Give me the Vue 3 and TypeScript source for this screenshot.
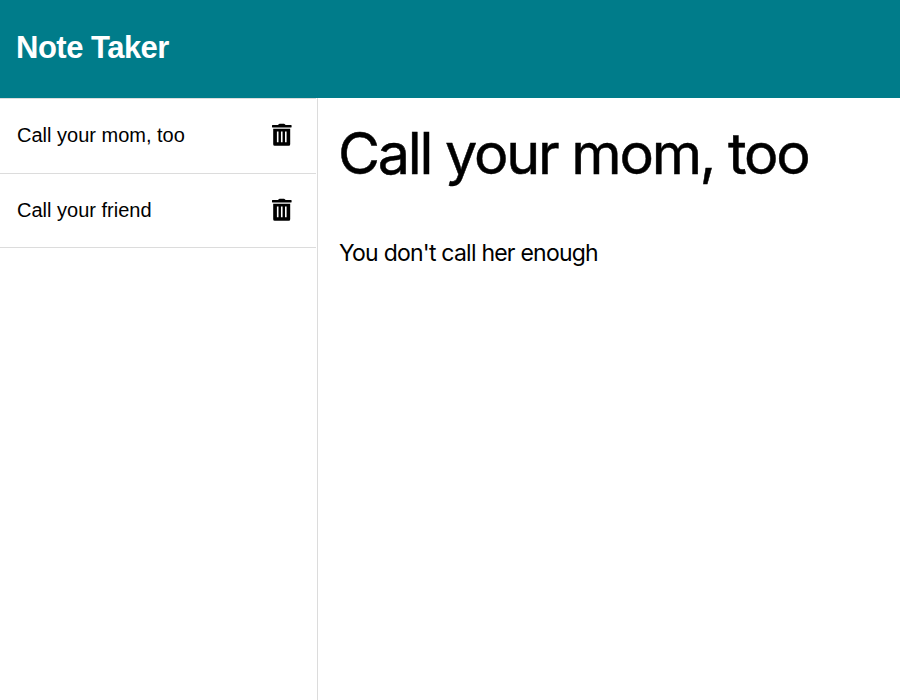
<script setup lang="ts">
import { ref } from 'vue'

interface Note {
  id: number
  title: string
  text: string
}

const notes = ref<Note[]>([
  { id: 1, title: 'Call your mom, too', text: "You don't call her enough" },
  { id: 2, title: 'Call your friend', text: '' },
])
const active = ref<Note>(notes.value[0])

function remove(id: number) {
  notes.value = notes.value.filter((n) => n.id !== id)
}
</script>

<template>
  <div class="page">
    <header class="navbar"><span class="brand">Note Taker</span></header>
    <div class="body">
      <aside class="sidebar">
        <ul class="list">
          <li v-for="note in notes" :key="note.id" class="item" @click="active = note">
            <span class="item-title">{{ note.title }}</span>
            <svg class="trash" viewBox="0 0 20 23" @click.stop="remove(note.id)">
              <path d="M.4 2H6L6.700 1.200Q7 .8 7.600 .8H12Q12.600 .8 12.900 1.200L13.600 2H19.200Q19.600 2 19.600 2.400V4.100Q19.600 4.500 19.200 4.500H.4Q0 4.500 0 4.100V2.400Q0 2 .4 2Z" />
              <path fill-rule="evenodd" d="M1.200 5.700H18.200V21.300Q18.200 22.800 16.700 22.800H2.700Q1.200 22.800 1.200 21.300ZM4.900 8.600V19.300H6.500V8.600ZM8.950 8.600V19.300H10.550V8.600ZM13 8.600V19.300H14.600V8.600Z" />
            </svg>
          </li>
        </ul>
      </aside>
      <main class="content">
        <h1 class="title">{{ active.title }}</h1>
        <p class="text">{{ active.text }}</p>
      </main>
    </div>
  </div>
</template>

<style>
body { margin: 0; background: #fff; }
</style>

<style scoped>
.page { height: 100vh; display: flex; flex-direction: column; overflow: hidden; color: #000; font-family: "Liberation Sans", Arial, sans-serif; }
.navbar { flex: none; box-sizing: border-box; height: 98px; padding: 27px 16px; background: #007c8a; color: #fff; }
.brand { font-size: 31px; line-height: 42px; font-weight: 700; letter-spacing: -0.5px; white-space: nowrap; }
.body { flex: 1; display: flex; min-height: 0; }
.sidebar { box-sizing: border-box; width: 318px; border-right: 1px solid #dcdcdc; padding-right: 1px; }
.list { list-style: none; margin: 0; padding: 0; }
.item { box-sizing: border-box; height: 74px; display: flex; align-items: center; justify-content: space-between; padding: 0 24px 1px 17px; border-bottom: 1px solid #dcdcdc; }
.item:first-child { height: 76px; padding-bottom: 2px; border-top: 1px solid #dcdcdc; }
.item-title { font-size: 20px; line-height: 30px; }
.trash { width: 20px; height: 23px; margin-bottom: 1px; }
.content { flex: 1; padding: 20px 21px; font-family: Inter, sans-serif; }
.title { margin: 0 0 0 -1px; font-size: 57.500px; line-height: 71px; font-weight: 400; letter-spacing: -2.250px; white-space: nowrap; -webkit-text-stroke: 0.500px #000; }
.text { margin: 46px 0 0; font-size: 23px; line-height: 36px; letter-spacing: -0.770px; }
</style>
